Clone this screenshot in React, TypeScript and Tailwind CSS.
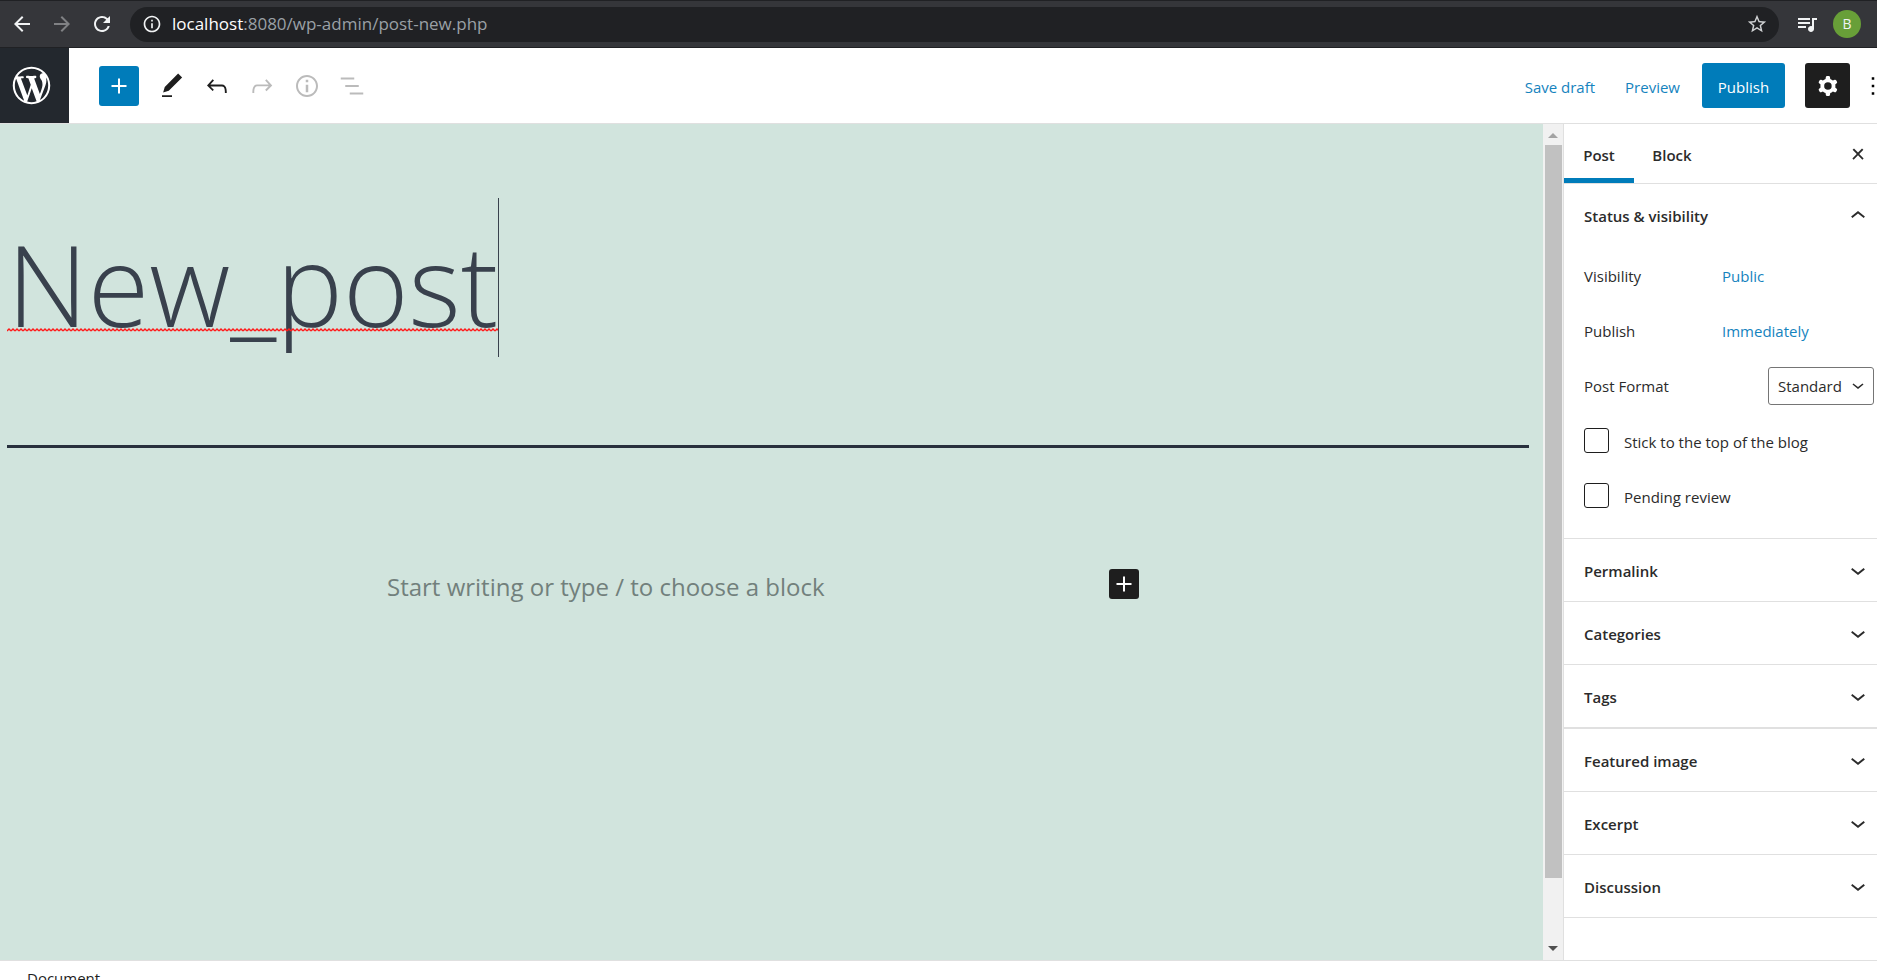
import { useState, type ReactNode } from "react";
import {
  MdArrowBack,
  MdArrowForward,
  MdInfoOutline,
  MdQueueMusic,
  MdRefresh,
  MdStarBorder,
} from "react-icons/md";

const icons = {
  plus: "M18 11.2h-5.2V6h-1.6v5.2H6v1.6h5.2V18h1.6v-5.2H18z",
  edit: "M20.1 5.1L16.9 2 6.2 12.7l-1.3 4.4 4.5-1.3L20.1 5.1zM4 20.8h8v-1.5H4v1.5z",
  undo: "M18.3 11.7c-.6-.6-1.4-.9-2.3-.9H6.7l2.9-3.3-1.1-1-4.5 5L8.5 16l1-1-2.7-2.7H16c.5 0 .9.2 1.3.5 1 1 1 3.4 1 4.5v.3h1.5v-.2c0-1.5 0-4.3-1.5-5.7z",
  redo: "M15.6 6.5l-1.1 1 2.9 3.3H8c-.9 0-1.7.3-2.3.9-1.4 1.5-1.4 4.2-1.4 5.6v.2h1.5v-.3c0-1.1 0-3.5 1-4.5.3-.3.7-.5 1.3-.5h9.2L14.5 15l1.1 1.1 4.6-4.6-4.6-5z",
  info: "M12 3.2c-4.8 0-8.8 3.9-8.8 8.8 0 4.8 3.9 8.8 8.8 8.8 4.8 0 8.8-3.9 8.8-8.8 0-4.8-4-8.8-8.8-8.8zm0 16c-4 0-7.2-3.3-7.2-7.2C4.8 8 8 4.8 12 4.8s7.2 3.3 7.2 7.2c0 4-3.2 7.2-7.2 7.2zM11 17h2v-6h-2v6zm0-8h2V7h-2v2z",
  outline: "M13.8 5.2H3v1.5h10.8V5.2zm-3.6 12v1.5H21v-1.5H10.2zm7.2-6H6.6v1.5h10.8v-1.5z",
  cog: "M10.289 4.836A1 1 0 0111.275 4h1.306a1 1 0 01.987.836l.244 1.466c.787.26 1.503.679 2.108 1.218l1.393-.522a1 1 0 011.216.437l.653 1.13a1 1 0 01-.23 1.273l-1.148.944a6.025 6.025 0 010 2.435l1.149.946a1 1 0 01.23 1.272l-.653 1.13a1 1 0 01-1.216.437l-1.394-.522c-.605.54-1.32.958-2.108 1.218l-.244 1.466a1 1 0 01-.987.836h-1.306a1 1 0 01-.986-.836l-.244-1.466a5.995 5.995 0 01-2.108-1.218l-1.394.522a1 1 0 01-1.217-.436l-.653-1.131a1 1 0 01.23-1.272l1.149-.946a6.026 6.026 0 010-2.435l-1.148-.944a1 1 0 01-.23-1.272l.653-1.131a1 1 0 011.217-.437l1.393.522a5.994 5.994 0 012.108-1.218l.244-1.466zM14.929 12a3 3 0 11-6 0 3 3 0 016 0z",
  more: "M13 19h-2v-2h2v2zm0-6h-2v-2h2v2zm0-6h-2V5h2v2z",
  close: "M13 11.9l3.3-3.4-1.1-1-3.2 3.3-3.2-3.3-1.1 1 3.3 3.4-3.5 3.6 1 1L12 13l3.5 3.5 1-1z",
  up: "M6.5 12.4L12 8l5.5 4.4-.9 1.2L12 10l-4.5 3.6-1-1.2z",
  down: "M17.5 11.6L12 16l-5.5-4.4.9-1.2L12 14l4.5-3.6 1 1.2z",
};

function Icon({ name, className = "size-[30px]" }: { name: keyof typeof icons; className?: string }) {
  return (
    <svg viewBox="0 0 24 24" className={`shrink-0 ${className}`} fill="currentColor" fillRule="evenodd" aria-hidden="true">
      <path d={icons[name]} />
    </svg>
  );
}

function WordPressLogo() {
  return (
    <svg viewBox="-2 -2 24 24" className="size-[45px]" fill="currentColor" aria-hidden="true">
      <path d="M20 10c0-5.51-4.49-10-10-10C4.48 0 0 4.49 0 10c0 5.52 4.48 10 10 10 5.51 0 10-4.48 10-10zM7.78 15.37L4.37 6.22c.55-.02 1.17-.08 1.17-.08.5-.06.44-1.13-.06-1.11 0 0-1.45.11-2.37.11-.18 0-.37 0-.58-.01C4.12 2.69 6.87 1.11 10 1.11c2.33 0 4.45.87 6.05 2.34-.68-.11-1.65.39-1.65 1.58 0 .74.45 1.36.9 2.1.35.61.55 1.36.55 2.46 0 1.49-1.4 5-1.4 5l-3.03-8.37c.54-.02.82-.17.82-.17.5-.05.44-1.25-.06-1.22 0 0-1.44.12-2.38.12-.87 0-2.33-.12-2.33-.12-.5-.03-.56 1.2-.06 1.22l.92.08 1.26 3.41zM17.41 10c.24-.64.74-1.87.43-4.25.7 1.29 1.05 2.71 1.05 4.25 0 3.29-1.73 6.24-4.4 7.78.97-2.59 1.94-5.2 2.92-7.78zM6.1 18.09C3.12 16.65 1.11 13.53 1.11 10c0-1.3.23-2.48.72-3.59C3.25 10.3 4.67 14.2 6.1 18.09zm4.03-6.63l2.58 6.98c-.86.29-1.76.45-2.71.45-.79 0-1.57-.11-2.29-.33.81-2.38 1.62-4.74 2.42-7.1z" />
    </svg>
  );
}

function BrowserBar() {
  return (
    <div className="flex h-12 shrink-0 items-center border-t border-b border-t-[#202124] border-b-[#202124] bg-[#35363a] pr-4 pl-[10px] text-[#f1f3f4]">
      <button type="button" aria-label="Back"><MdArrowBack className="size-6" /></button>
      <button type="button" aria-label="Forward" className="ml-4 text-[#808184]"><MdArrowForward className="size-6" /></button>
      <button type="button" aria-label="Reload" className="ml-4"><MdRefresh className="size-6" /></button>
      <div className="ml-4 flex h-[35px] flex-1 items-center rounded-full bg-[#202124] pr-[11px] pl-3">
        <MdInfoOutline className="size-5" />
        <span className="ml-[10px] flex-1 text-[17px] text-[#9aa0a6]">
          <span className="text-white">localhost</span>:8080/wp-admin/post-new.php
        </span>
        <button type="button" aria-label="Bookmark" className="text-[#d0d2d4]"><MdStarBorder className="size-[22px]" /></button>
      </div>
      <button type="button" aria-label="Media controls" className="ml-4"><MdQueueMusic className="size-6" /></button>
      <button type="button" aria-label="Profile" className="ml-[14px] size-7 rounded-full bg-[#689f38] text-sm">B</button>
    </div>
  );
}

function ToolButton({ name, label, disabled }: { name: keyof typeof icons; label: string; disabled?: boolean }) {
  return (
    <button type="button" aria-label={label} disabled={disabled} className="flex size-[45px] items-center justify-center text-[#1e1e1e] disabled:text-[#bbbbbb]">
      <Icon name={name} />
    </button>
  );
}

function EditorHeader() {
  return (
    <header className="flex h-[76px] shrink-0 items-center border-b border-[#e0e0e0]">
      <a href="#posts" aria-label="View posts" className="flex h-full w-[69px] items-center bg-[#23282e] pl-[9px] text-white">
        <WordPressLogo />
      </a>
      <button type="button" aria-label="Add block" className="mr-[10px] ml-[30px] flex size-10 items-center justify-center rounded-[3px] bg-[#007cba] text-white">
        <Icon name="plus" />
      </button>
      <ToolButton name="edit" label="Tools" />
      <ToolButton name="undo" label="Undo" />
      <ToolButton name="redo" label="Redo" disabled />
      <ToolButton name="info" label="Details" disabled />
      <ToolButton name="outline" label="Outline" disabled />
      <div className="ml-auto flex items-center text-[15px]">
        <button type="button" className="pt-[3px] text-[#1583be]">Save draft</button>
        <button type="button" className="ml-[30px] pt-[3px] text-[#1583be]">Preview</button>
        <button type="button" className="ml-[22px] h-[45px] w-[83px] rounded-[3px] bg-[#007cba] pt-[3px] text-white">Publish</button>
        <button type="button" aria-label="Settings" className="mr-[18px] ml-5 flex size-[45px] items-center justify-center rounded-[3px] bg-[#1e1e1e] text-white">
          <Icon name="cog" />
        </button>
        <button type="button" aria-label="Options" className="flex w-[9px] justify-center overflow-hidden">
          <Icon name="more" />
        </button>
      </div>
    </header>
  );
}

function Title() {
  const [title, setTitle] = useState("New_post");
  return (
    <div className="relative inline-flex h-[159px] border-r border-[#39414d]">
      <input
        aria-label="Post title"
        value={title}
        onChange={(e) => setTitle(e.target.value)}
        spellCheck={false}
        className="[field-sizing:content] h-full bg-transparent pt-3 text-[112px] font-light text-[#39414d] outline-none"
      />
      <svg className="pointer-events-none absolute top-[130px] left-0 h-[4px] w-full" aria-hidden="true">
        <pattern id="wave" width="4" height="4" patternUnits="userSpaceOnUse">
          <path d="M0 3L2 1L4 3" fill="none" stroke="#ff1a1a" strokeWidth="1.4" />
        </pattern>
        <rect width="100%" height="4" fill="url(#wave)" />
      </svg>
    </div>
  );
}

function Canvas() {
  return (
    <main className="min-w-0 flex-1 bg-[#d1e4dd] pt-[74px] pr-[14px] pl-[7px]">
      <Title />
      <hr className="mt-[88px] border-t-[3px] border-[#28303d]" />
      <div className="mx-auto mt-[121px] flex max-w-[762px] items-start pr-[10px]">
        <input aria-label="Add block text" placeholder="Start writing or type / to choose a block" className="h-[34px] min-w-0 flex-1 bg-transparent text-2xl outline-none placeholder:text-[#72807c]" />
        <button type="button" aria-label="Insert block" className="flex size-[30px] items-center justify-center rounded-[3px] bg-[#1e1e1e] text-white">
          <Icon name="plus" />
        </button>
      </div>
    </main>
  );
}

function Scrollbar() {
  return (
    <div className="flex w-5 shrink-0 flex-col items-center bg-[#f1f1f1]" aria-hidden="true">
      <svg viewBox="0 0 20 21" className="h-[21px] w-5 shrink-0"><path d="M5 14L10 9L15 14Z" fill="#a3a3a3" /></svg>
      <div className="w-[17px] flex-[733] bg-[#c1c1c1]" />
      <div className="flex-[62]" />
      <svg viewBox="0 0 20 20" className="h-5 w-5 shrink-0"><path d="M5 6L10 11L15 6Z" fill="#505050" /></svg>
    </div>
  );
}

function Row({ label, children }: { label: string; children: ReactNode }) {
  return (
    <div className="flex h-[55px] items-center pt-[2px]">
      <span className="w-[138px]">{label}</span>
      {children}
    </div>
  );
}

function CheckRow({ label }: { label: string }) {
  return (
    <label className="flex h-[55px] items-center gap-[15px]">
      <input type="checkbox" className="size-[25px] appearance-none rounded-[3px] border border-[#1e1e1e] bg-white checked:bg-[#007cba]" />
      <span className="pt-[3px]">{label}</span>
    </label>
  );
}

function Panel({ title }: { title: string }) {
  return (
    <button type="button" className="flex h-[63px] w-full shrink-0 items-center justify-between border-b border-[#e0e0e0] pr-1 pl-5 font-semibold">
      <span className="pt-[2px]">{title}</span>
      <Icon name="down" />
    </button>
  );
}

function Sidebar() {
  return (
    <aside className="flex w-[314px] shrink-0 flex-col border-l border-[#e0e0e0] text-[15px] text-[#2b2b2b]">
      <div className="flex h-[60px] shrink-0 items-stretch border-b border-[#e0e0e0]">
        <button type="button" className="w-[70px] pt-[3px] font-semibold shadow-[inset_0_-5px_0_#007cba]">Post</button>
        <button type="button" className="w-[76px] pt-[3px] font-semibold">Block</button>
        <button type="button" aria-label="Close settings" className="mr-1 ml-auto"><Icon name="close" /></button>
      </div>
      <section className="h-[355px] shrink-0 border-b border-[#e0e0e0] pl-5">
        <button type="button" className="flex h-[64px] w-full items-center justify-between pr-1 font-semibold">
          Status &amp; visibility
          <Icon name="up" />
        </button>
        <Row label="Visibility"><button type="button" className="text-[#1583be]">Public</button></Row>
        <Row label="Publish"><button type="button" className="text-[#1583be]">Immediately</button></Row>
        <div className="flex h-[55px] items-center justify-between pr-[3px]">
          <label htmlFor="format" className="pt-[2px]">Post Format</label>
          <div className="relative flex">
            <select id="format" className="h-[38px] w-[106px] appearance-none rounded-[3px] border border-[#757575] bg-white pt-[2px] pl-[9px]">
              <option>Standard</option>
            </select>
            <Icon name="down" className="pointer-events-none absolute top-[6px] right-1 size-6" />
          </div>
        </div>
        <CheckRow label="Stick to the top of the blog" />
        <CheckRow label="Pending review" />
      </section>
      <Panel title="Permalink" />
      <Panel title="Categories" />
      <Panel title="Tags" />
      <div className="shrink-0 border-t border-[#e0e0e0]">
        <Panel title="Featured image" />
        <Panel title="Excerpt" />
        <Panel title="Discussion" />
      </div>
    </aside>
  );
}

export default function App() {
  return (
    <div className="flex h-screen flex-col overflow-hidden bg-white font-['Open_Sans','Noto_Sans',sans-serif]">
      <BrowserBar />
      <EditorHeader />
      <div className="flex min-h-0 flex-1">
        <Canvas />
        <Scrollbar />
        <Sidebar />
      </div>
      <footer className="h-5 shrink-0 overflow-hidden border-t border-[#e0e0e0] pt-[6px] pl-[27px] text-[15px] text-[#1e1e1e]">
        Document
      </footer>
    </div>
  );
}
